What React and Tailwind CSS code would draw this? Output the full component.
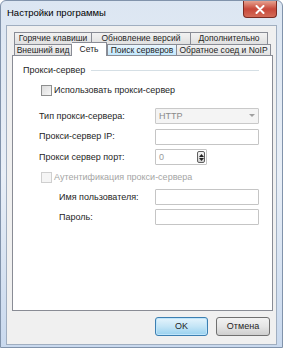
import React from "react";

const font = { fontFamily: '"Liberation Sans", Arial, sans-serif' };

function Tab({ children, w, variant = "normal", first }) {
  const base = "h-[12px] flex items-center justify-center whitespace-nowrap overflow-hidden text-[8.5px] leading-none border-t border-r border-[#898c95] text-[#1e1e1e] ";
  const v =
    variant === "hover"
      ? "bg-gradient-to-b from-[#eaf6fd] to-[#bee6fd] border-[#3c7fb1] border-l "
      : "bg-gradient-to-b from-[#f2f2f2] to-[#e0e0e0] ";
  return (
    <div className={base + v + (first ? "border-l " : "")} style={{ width: w }}>
      {children}
    </div>
  );
}

function Input({ w = "w-[104px]", children, disabled }) {
  return (
    <div
      className={
        "h-[16px] border rounded-[1px] flex items-center px-[3px] text-[9px] " +
        (disabled ? "border-[#c9c9c9] bg-[#f4f4f4] text-[#8a8a8a] " : "border-[#c5c5c5] bg-white text-[#9a9a9a] ") +
        w
      }
    >
      {children}
    </div>
  );
}

function Row({ label, children, indent = "pl-[26px]", h = "h-[20px]" }) {
  return (
    <div className={"flex items-center " + h + " " + indent}>
      <div className={indent === "pl-[26px]" ? "w-[116px]" : "w-[96px]"}>{label}</div>
      {children}
    </div>
  );
}

export default function App() {
  return (
    <div
      className="w-[283px] h-[350px] bg-white flex items-start text-[#1e1e1e]"
      style={font}
    >
      <div className="w-[283px] h-[348px] rounded-t-[6px] border border-[#8193ab] bg-gradient-to-b from-[#dce6f2] via-[#e9eff7] to-[#c9d9ee] flex flex-col">
        {/* title bar */}
        <div className="h-[24px] flex items-start justify-between">
          <div className="pl-[6px] pt-[7px] text-[9.5px] text-black leading-none">Настройки программы</div>
          <div className="mr-[5px] w-[34px] h-[17px] rounded-b-[4px] border border-t-0 border-[#7a2b22] bg-gradient-to-b from-[#e5a08f] via-[#c7473a] to-[#d36b58] flex items-center justify-center">
            <svg width="10" height="9" viewBox="0 0 10 9">
              <path d="M1.5 1 L8.5 8 M8.5 1 L1.5 8" stroke="#ffffff" strokeWidth="2" strokeLinecap="round" />
            </svg>
          </div>
        </div>
        {/* client */}
        <div className="mx-[5px] h-[320px] bg-[#f0f0f0] border border-[#a0aec0] flex flex-col">
          <div className="pt-[6px] pl-[7px] flex flex-col">
            {/* row 1 */}
            <div className="flex h-[12px]">
              <Tab w="78px" first>Горячие клавиши</Tab>
              <Tab w="99px">Обновление версий</Tab>
              <Tab w="77px">Дополнительно</Tab>
            </div>
            {/* row 2 */}
            <div className="flex h-[12px] items-end">
              <Tab w="58px" first>Внешний вид</Tab>
              <div className="w-[35px] h-[14px] -mt-[2px] bg-white border-t border-r border-[#898c95] flex items-start justify-center pt-[2px] text-[8.5px] leading-none relative z-10">
                Сеть
              </div>
              <Tab w="70px" variant="hover">Поиск серверов</Tab>
              <Tab w="94px">Обратное соед и NoIP</Tab>
            </div>
          </div>
          {/* panel */}
          <div className="ml-[5px] w-[261px] h-[256px] -mt-px bg-white border border-[#898c95] text-[9px] leading-none flex flex-col">
            <div className="flex items-center h-[10px] mt-[9px] pl-[10px] pr-[13px] gap-[6px]">
              <span className="text-[#1e1e1e]">Прокси-сервер</span>
              <div className="flex-1 h-px bg-[#d5dfe5]" />
            </div>
            <div className="flex items-center h-[16px] mt-[7px] pl-[28px] gap-[2px]">
              <div className="w-[11px] h-[11px] border border-[#8e8f8f] bg-gradient-to-br from-[#dcdcdc] to-[#f7f7f7]" />
              <span>Использовать прокси-сервер</span>
            </div>
            <div className="h-[8px]" />
            <Row label="Тип прокси-сервера:">
              <div className="w-[104px] h-[16px] border border-[#c9c9c9] bg-[#f4f4f4] rounded-[1px] flex items-center justify-between px-[3px] text-[#8a8a8a]">
                <span>HTTP</span>
                <svg width="6" height="4" viewBox="0 0 6 4"><path d="M0 0 H6 L3 3 Z" fill="#a0a0a0" /></svg>
              </div>
            </Row>
            <Row label="Прокси-сервер IP:" h="h-[21px]">
              <Input />
            </Row>
            <Row label="Прокси сервер порт:">
              <div className="w-[52px] h-[16px] border border-[#c5c5c5] bg-white rounded-[1px] flex items-center justify-between pl-[3px] pr-[1px] text-[#9a9a9a]">
                <span>0</span>
                <div className="w-[8px] h-[12px] rounded-[2px] border border-[#606060] bg-gradient-to-b from-[#f4f4f4] to-[#cfcfcf] flex flex-col items-center justify-center gap-[1px]">
                  <svg width="5" height="3" viewBox="0 0 5 3"><path d="M0 3 L2.5 0 L5 3 Z" fill="#222" /></svg>
                  <svg width="5" height="3" viewBox="0 0 5 3"><path d="M0 0 H5 L2.5 3 Z" fill="#222" /></svg>
                </div>
              </div>
            </Row>
            <div className="flex items-center h-[20px] pl-[28px] gap-[2px] text-[#a5a5a5]">
              <div className="w-[11px] h-[11px] border border-[#cfcfcf] bg-[#f5f5f5]" />
              <span>Аутентификация прокси-сервера</span>
            </div>
            <Row label="Имя пользователя:" indent="pl-[46px]">
              <Input />
            </Row>
            <Row label="Пароль:" indent="pl-[46px]">
              <Input />
            </Row>
          </div>
          {/* buttons */}
          <div className="flex justify-end gap-[8px] pr-[6px] mt-[6px] text-[9px]">
            <div className="w-[53px] h-[19px] rounded-[3px] border border-[#3c7fb1] bg-gradient-to-b from-[#e5f4fc] via-[#c4e5f6] to-[#98d1ef] shadow-[inset_0_0_0_1px_#bfe5fb] flex items-center justify-center">
              OK
            </div>
            <div className="w-[54px] h-[19px] rounded-[3px] border border-[#707070] bg-gradient-to-b from-[#f2f2f2] via-[#e5e5e5] to-[#cfcfcf] flex items-center justify-center">
              Отмена
            </div>
          </div>
        </div>
      </div>
    </div>
  );
}
